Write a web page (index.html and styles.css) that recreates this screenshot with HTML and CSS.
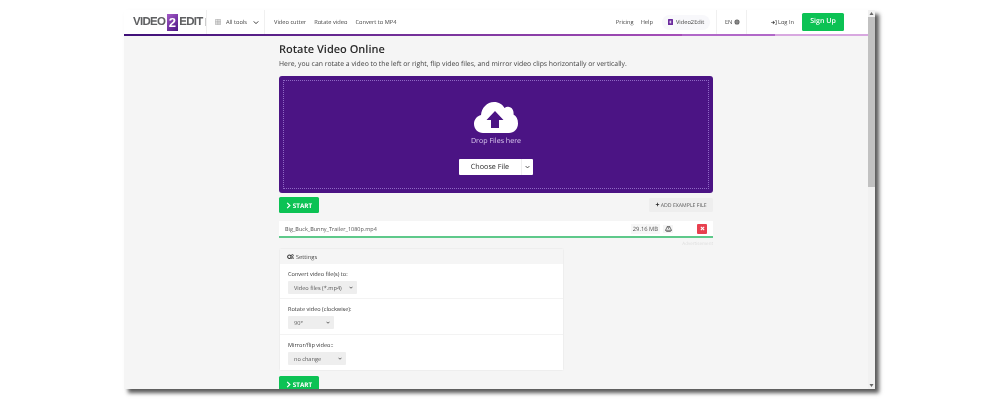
FILE: index.html
```html
<!DOCTYPE html>
<html lang="en">
<head>
<meta charset="utf-8">
<title>Rotate Video Online</title>
<link rel="stylesheet" href="styles.css">
</head>
<body>
<div class="window">
  <div class="page">
    <header class="topbar">
      <a class="logo"><span>VIDEO</span><b class="logo-two">2</b><span>EDIT</span><i class="logo-end"></i></a>
      <div class="tools">
        <svg class="grid-ico" viewBox="0 0 8 8"><path d="M.5.5h7v7h-7zM.5 3h7M.5 5.3h7M3 .5v7M5.3.5v7" fill="none" stroke="#888" stroke-width=".6"/></svg>
        <span>All tools</span>
        <svg class="chev" viewBox="0 0 8 6"><path d="M1 1.5l3 3 3-3" fill="none" stroke="#333" stroke-width="1.3"/></svg>
      </div>
      <nav class="nav-left"><a>Video cutter</a><a>Rotate video</a><a>Convert to MP4</a></nav>
      <nav class="nav-right">
        <a>Pricing</a><a>Help</a>
        <a class="pill"><svg viewBox="0 0 6 7"><rect width="6" height="7" rx=".6" fill="#6b2a9e"/><path d="M2 2h2v1H3v1h1v1H2z" fill="#fff"/></svg>Video2Edit</a>
      </nav>
      <div class="lang">EN<svg viewBox="0 0 8 8"><circle cx="4" cy="4" r="3.4" fill="#666"/><path d="M1 4h6M4 1v6" stroke="#ccc" stroke-width=".5"/></svg></div>
      <a class="login"><svg viewBox="0 0 8 6"><path d="M0 3h4M3 1.2L5 3 3 4.8z" stroke="#444" fill="#444" stroke-width=".8"/><path d="M5.5.5H7.5v5H5.5" fill="none" stroke="#444" stroke-width=".8"/></svg>Log In</a>
      <a class="signup">Sign Up</a>
    </header>
    <div class="stripe"></div>
    <main class="content">
      <h1>Rotate Video Online</h1>
      <p class="lead">Here, you can rotate a video to the left or right, flip video files, and mirror video clips horizontally or vertically.</p>
      <section class="drop">
        <div class="drop-inner">
          <svg class="cloud" viewBox="0 0 44 31"><path d="M9 31C4 31 0 27 0 22 0 17.500 3 14 7 13 7.500 6 13 0 20 0 25 0 28.500 2.500 30.500 6 32 5 33.500 4.500 35 5 38.500 5.500 40 9 39.500 12.500 42.500 14 44 17.500 44 21.500 44 27 40 31 35 31z" fill="#fff"/><path d="M21 9L29.500 18H25V26H17V18H12.500z" fill="#4b1484"/></svg>
          <div class="drop-text">Drop Files here</div>
          <div class="choose"><span class="choose-main">Choose File</span><span class="choose-arrow"><svg viewBox="0 0 8 6"><path d="M1 1.500l3 3 3-3" fill="none" stroke="#333" stroke-width="1.300"/></svg></span></div>
        </div>
      </section>
      <div class="actions">
        <a class="start"><svg viewBox="0 0 5 8"><path d="M1 1l3 3-3 3" fill="none" stroke="#fff" stroke-width="1.400"/></svg>START</a>
        <a class="example"><b>+</b> ADD EXAMPLE FILE</a>
      </div>
      <div class="file">
        <span class="file-name">Big_Buck_Bunny_Trailer_1080p.mp4</span>
        <span class="file-size">29.16 MB</span>
        <span class="file-drive"><svg viewBox="0 0 8 7"><path d="M2.700.5h2.600L7.500 5 6.200 6.500H1.800L.5 5zM2.700.5L4 3M5.300.5L4 3M.5 5h7" fill="none" stroke="#555" stroke-width=".9"/></svg></span>
        <span class="file-del"><svg viewBox="0 0 6 6"><path d="M1 1l4 4M5 1L1 5" stroke="#fff" stroke-width="1.300"/></svg></span>
      </div>
      <div class="advert">Advertisement</div>
      <section class="settings">
        <div class="settings-head"><svg viewBox="0 0 9 7"><circle cx="3" cy="3.500" r="2.200" fill="none" stroke="#333" stroke-width="1.300"/><circle cx="7" cy="1.800" r="1.200" fill="none" stroke="#333"/><circle cx="7" cy="5.400" r="1.200" fill="none" stroke="#333"/></svg>Settings</div>
        <div class="field">
          <label for="s1">Convert video file(s) to:</label>
          <select id="s1" class="sel-format"><option>Video files (*.mp4)</option></select>
        </div>
        <div class="field">
          <label for="s2">Rotate video (clockwise):</label>
          <select id="s2" class="sel-rotate"><option>90°</option></select>
        </div>
        <div class="field">
          <label for="s3">Mirror/flip video::</label>
          <select id="s3" class="sel-mirror"><option>no change</option></select>
        </div>
      </section>
      <a class="start start-bottom"><svg viewBox="0 0 5 8"><path d="M1 1l3 3-3 3" fill="none" stroke="#fff" stroke-width="1.400"/></svg>START</a>
    </main>
  </div>
  <div class="scrollbar">
    <svg class="sb-arrow" viewBox="0 0 7 7"><path d="M3.500 2L5.500 5h-4z" fill="#666"/></svg>
    <div class="sb-thumb"></div>
    <svg class="sb-arrow sb-end" viewBox="0 0 7 7"><path d="M3.500 5L5.500 2h-4z" fill="#666"/></svg>
  </div>
</div>
</body>
</html>
```
FILE: styles.css
```css
* { box-sizing: border-box; }
html, body { margin: 0; height: 400px; overflow: hidden; background: #fff; }
body {
  padding: 10px 0 0 124px;
  font-family: "Open Sans", sans-serif;
  font-weight: 500;
  color: #333;
  text-rendering: geometricPrecision;
}
a { color: inherit; text-decoration: none; }

.window {
  display: flex;
  width: 751px;
  height: 379px;
  background: #f5f5f5;
  box-shadow: 4px 4px 4px rgba(0,0,0,.65);
  overflow: hidden;
}
.page {
  width: 744px;
  flex: none;
  height: 379px;
  overflow: hidden;
  filter: blur(.3px);
}

/* top bar */
.topbar {
  display: flex;
  align-items: center;
  height: 24px;
  background: #fff;
  font-size: 5.700px;
  color: #444;
}
.logo {
  display: flex;
  align-items: center;
  width: 83px;
  height: 24px;
  padding-left: 9px;
  font: bold 11.500px "Liberation Sans", sans-serif;
  letter-spacing: -.7px;
  color: #5f6062;
  border-right: 1px solid #f0f0f0;
}
.logo-two {
  width: 11px;
  height: 17px;
  margin: 0 1.500px 0 1.500px;
  background: linear-gradient(135deg, #a55bc8, #4b1484);
  color: #fff;
  text-align: center;
  font-size: 13px;
  line-height: 17px;
  letter-spacing: 0;
}
.logo-end { width: 1px; height: 8px; margin-left: 2px; background: #ccc; }
.tools {
  display: flex;
  align-items: center;
  width: 58px;
  height: 24px;
  padding-left: 8px;
  border-right: 1px solid #f0f0f0;
}
.grid-ico { width: 6px; height: 6px; margin-right: 5px; }
.chev { width: 6px; height: 5px; margin-left: 6px; }
.nav-left { display: flex; gap: 8px; margin-left: 9px; }
.nav-right { display: flex; align-items: center; gap: 7px; margin-left: auto; }
.pill {
  display: flex;
  align-items: center;
  gap: 3px;
  width: 48px;
  height: 15px;
  padding: 0 6px;
  margin-left: 2px;
  border-radius: 8px;
  background: #f8f8fb;
  white-space: nowrap;
}
.pill svg { width: 5px; height: 6px; flex: none; }
.lang {
  display: flex;
  align-items: center;
  gap: 2px;
  width: 31px;
  height: 24px;
  margin-left: 6px;
  padding-left: 8px;
  border-left: 1px solid #f0f0f0;
  border-right: 1px solid #f0f0f0;
}
.lang svg { width: 6px; height: 6px; }
.login { display: flex; align-items: center; gap: 1px; margin-left: 24px; }
.login svg { width: 6px; height: 5px; }
.signup {
  width: 42px;
  height: 18px;
  margin: 0 24px 0 8px;
  border-radius: 1.500px;
  background: #0cc254;
  color: #fff;
  text-align: center;
  font-size: 7px;
  font-weight: 600;
  line-height: 18px;
}
.stripe {
  height: 2px;
  background: linear-gradient(90deg, #3f1078 0, #a64fb8 75%, #b168c8 75%, #b168c8 87.500%, #d8a8e0 87.500%, #d8a8e0 100%);
}

/* main column */
.content { width: 434px; margin: 0 auto; }
h1 {
  margin: 6px 0 0;
  font-size: 11px;
  font-weight: 600;
  line-height: 15px;
  color: #2b2b2b;
}
.lead { margin: 2px 0 0; font-size: 6.850px; line-height: 11px; color: #444; }

/* drop zone */
.drop {
  height: 117px;
  margin-top: 6px;
  padding: 4px;
  border-radius: 3px;
  background: #4b1484;
}
.drop-inner {
  display: flex;
  flex-direction: column;
  align-items: center;
  height: 109px;
  padding-top: 21px;
  border: 1.500px dotted #8f68c4;
}
.cloud { width: 44px; height: 31px; flex: none; }
.drop-text { margin-top: 3px; font-size: 7.100px; line-height: 11px; color: #dcccf0; }
.choose {
  display: flex;
  height: 16px;
  margin-top: 12px;
  border-radius: 1px;
  background: #fff;
  color: #2b2b2b;
  font-size: 7.200px;
  line-height: 16px;
}
.choose-main { width: 63px; text-align: center; border-right: 1px solid #eee; }
.choose-arrow { display: flex; align-items: center; justify-content: center; width: 11px; }
.choose-arrow svg { width: 5px; height: 4px; }

/* action row */
.actions {
  display: flex;
  align-items: center;
  justify-content: space-between;
  margin-top: 4px;
}
.start {
  display: flex;
  align-items: center;
  justify-content: center;
  gap: 2px;
  width: 40px;
  height: 16px;
  border-radius: 1.500px;
  background: #0cc254;
  color: #fff;
  font-size: 6.300px;
  font-weight: 700;
}
.start svg { width: 5px; height: 7px; }
.example {
  width: 64px;
  height: 14px;
  border-radius: 1.500px;
  background: #eee;
  color: #555;
  text-align: center;
  font-size: 5.200px;
  line-height: 14px;
  white-space: nowrap;
}
.example b { color: #222; font-size: 7px; }

/* file row */
.file {
  display: flex;
  align-items: center;
  height: 17px;
  margin-top: 8px;
  padding: 0 6px;
  background: #fff;
  border-bottom: 2px solid #5ec98a;
  font-size: 5.500px;
  color: #555;
}
.file-name { flex: 1; }
.file-size { padding: 1px 2px; background: #f7f7f7; font-size: 5.800px; }
.file-drive {
  display: flex;
  align-items: center;
  justify-content: center;
  width: 10px;
  height: 8px;
  margin-left: 3px;
  background: #f5f5f5;
}
.file-drive svg { width: 7px; height: 6px; }
.file-del {
  display: flex;
  align-items: center;
  justify-content: center;
  width: 10px;
  height: 10px;
  margin: 0 0 0 24px;
  border-radius: 1px;
  background: #e8404f;
}
.file-del svg { width: 5px; height: 5px; }
.advert { height: 10px; font-size: 4.500px; line-height: 12px; text-align: right; color: #ddd; }

/* settings card */
.settings {
  width: 285px;
  height: 123px;
  background: #fff;
  border: 1px solid #eee;
  border-radius: 1.500px;
}
.settings-head {
  display: flex;
  align-items: center;
  gap: 2px;
  height: 15px;
  padding-left: 7px;
  background: #f5f5f5;
  font-size: 5.700px;
  color: #444;
}
.settings-head svg { width: 7px; height: 5.500px; }
.field {
  display: flex;
  flex-direction: column;
  align-items: flex-start;
  height: 35px;
  padding: 5px 8px 0;
  border-bottom: 1.500px solid #f3f3f3;
}
.field:nth-child(3) { height: 36px; }
.field:last-child { border-bottom: 0; }
.field label { height: 11px; font-size: 5.600px; line-height: 11px; color: #333; }
.field select {
  appearance: none;
  height: 13px;
  margin-top: 1px;
  padding: 0 0 0 6px;
  border: 0;
  border-radius: 1px;
  background: #eee url("data:image/svg+xml,%3Csvg xmlns='http://www.w3.org/2000/svg' viewBox='0 0 8 6'%3E%3Cpath d='M1 1.500l3 3 3-3' fill='none' stroke='%23333' stroke-width='1.500'/%3E%3C/svg%3E") no-repeat right 4px center / 4px 3px;
  color: #555;
  font: 500 5.600px "Open Sans", sans-serif;
  text-rendering: geometricPrecision;
}
.sel-format { width: 69px; }
.sel-rotate { width: 46px; }
.sel-mirror { width: 58px; }
.start-bottom { margin-top: 5px; }

/* scrollbar */
.scrollbar {
  display: flex;
  flex-direction: column;
  align-items: center;
  width: 7px;
  flex: none;
  height: 379px;
  background: #f1f1f1;
}
.sb-arrow { width: 7px; height: 7px; flex: none; }
.sb-thumb { width: 7px; height: 170px; background: #c1c1c1; }
.sb-end { margin-top: auto; }
```
